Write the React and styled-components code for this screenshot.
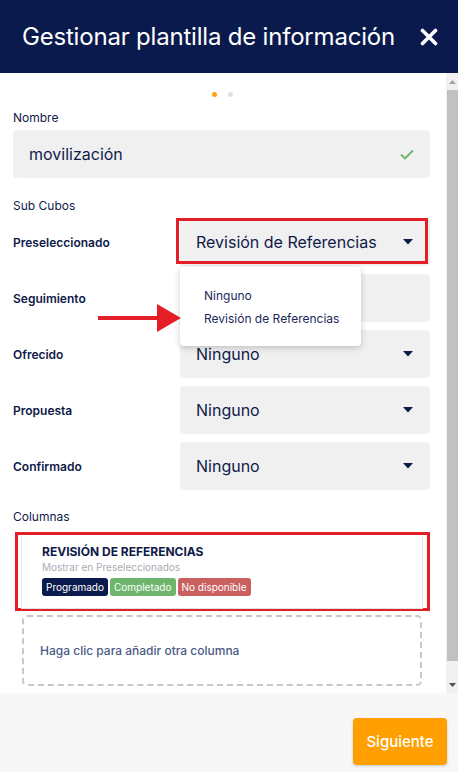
import React from 'react';
import styled, { createGlobalStyle } from 'styled-components';

const GlobalStyle = createGlobalStyle`
  html, body {
    margin: 0;
    padding: 0;
    background: #ffffff;
  }
  body {
    font-family: Inter, 'Open Sans', 'Liberation Sans', sans-serif;
    color: #0f1a4a;
  }
`;

const Modal = styled.div`
  width: 458px;
  height: 772px;
  display: flex;
  flex-direction: column;
  background: #fff;
  overflow: hidden;
`;

const Header = styled.div`
  height: 73px;
  flex: none;
  background: #0b1a4d;
  display: flex;
  align-items: center;
  justify-content: space-between;
  padding: 0 20px 0 22px;
  box-sizing: border-box;
`;

const Title = styled.h1`
  margin: 0;
  color: #fff;
  font-size: 24px;
  font-weight: 400;
  letter-spacing: -0.2px;
`;

const CloseButton = styled.button`
  border: none;
  background: none;
  padding: 0;
  display: flex;
  cursor: pointer;
`;

const BodyRow = styled.div`
  flex: 1;
  display: flex;
  min-height: 0;
`;

const Content = styled.div`
  flex: 1;
  padding: 0 16px 0 13px;
  position: relative;
`;

const Scrollbar = styled.div`
  width: 12px;
  flex: none;
  background: #f1f1f1;
  display: flex;
  flex-direction: column;
  align-items: center;
`;

const ScrollArrow = styled.div`
  height: 17px;
  display: flex;
  align-items: center;
  justify-content: center;
  flex: none;
`;

const ScrollThumb = styled.div`
  width: 11px;
  margin-left: 1px;
  height: 571px;
  background: #c1c1c1;
`;

const Spacer = styled.div`
  flex: 1;
`;

const Dots = styled.div`
  display: flex;
  justify-content: center;
  gap: 11px;
  padding: 19px 0 0 2px;
  height: 6px;
`;

const Dot = styled.span`
  width: 5px;
  height: 5px;
  border-radius: 50%;
  background: ${p => (p.active ? '#ffa000' : '#dde1e6')};
`;

const Label = styled.div`
  font-size: 12px;
  color: #0f1a4a;
  margin-top: ${p => p.top}px;
  line-height: 16px;
`;

const TextInput = styled.div`
  margin-top: 4px;
  height: 48px;
  background: #f0f0f0;
  border-radius: 4px;
  display: flex;
  align-items: center;
  justify-content: space-between;
  padding: 0 16px 0 16px;
  font-size: 16px;
  color: #0f1a4a;
`;

const Rows = styled.div`
  display: flex;
  flex-direction: column;
  gap: 8px;
  margin-top: 4px;
`;

const Row = styled.div`
  display: flex;
  align-items: center;
  position: relative;
`;

const RowLabel = styled.div`
  width: 167px;
  font-size: 12px;
  font-weight: 600;
  color: #0f1a4a;
`;

const Select = styled.div`
  flex: 1;
  height: 48px;
  background: #f0f0f0;
  border-radius: 4px;
  display: flex;
  align-items: center;
  justify-content: space-between;
  padding: 0 17px 0 16px;
  font-size: 16px;
  color: #0f1a4a;
  position: relative;
`;

const Highlight = styled.div`
  position: absolute;
  left: -4px;
  top: 0;
  right: 2px;
  bottom: 2px;
  border: 3px solid #e41e26;
  pointer-events: none;
`;

const Menu = styled.div`
  position: absolute;
  left: 167px;
  top: 49px;
  width: 181px;
  height: 79px;
  background: #fff;
  border-radius: 4px;
  box-shadow: 0 2px 6px rgba(0, 0, 0, 0.2);
  display: flex;
  flex-direction: column;
  justify-content: center;
  gap: 8px;
  padding: 0 0 0 24px;
  box-sizing: border-box;
  z-index: 3;
`;

const MenuItem = styled.div`
  font-size: 12px;
  color: #1c2a5a;
`;

const ArrowMark = styled.svg`
  position: absolute;
  left: 85px;
  top: 85px;
  z-index: 4;
`;

const CardOutline = styled.div`
  margin: 7px 0 0 2px;
  border: 3px solid #e41e26;
  padding: 1px 4px 0 3px;
  height: 79px;
  box-sizing: border-box;
`;

const Card = styled.div`
  height: 73px;
  border: 1px solid #e4e4e4;
  border-top: none;
  background: #fff;
  padding: 8px 0 0 20px;
  box-sizing: border-box;
`;

const CardTitle = styled.div`
  font-size: 12px;
  font-weight: 700;
  color: #0f1a4a;
  line-height: 15px;
`;

const CardSub = styled.div`
  font-size: 10px;
  color: #a9acb6;
  margin-top: 2px;
  line-height: 12px;
`;

const Badges = styled.div`
  display: flex;
  gap: 2px;
  margin-top: 5px;
`;

const Badge = styled.span`
  background: ${p => p.color};
  color: #fff;
  font-size: 10px;
  padding: 0 4px;
  height: 18px;
  line-height: 18px;
  border-radius: 3px;
`;

const AddColumn = styled.div`
  margin: 4px 8px 0 9px;
  height: 71px;
  border: 2px dashed #c8c8c8;
  border-radius: 5px;
  box-sizing: border-box;
  display: flex;
  align-items: center;
  padding-left: 16px;
  font-size: 12px;
  font-weight: 500;
  color: #4b5a86;
`;

const Footer = styled.div`
  height: 79px;
  flex: none;
  background: #f7f7f7;
  display: flex;
  justify-content: flex-end;
  align-items: flex-start;
  padding: 25px 11px 0 0;
  box-sizing: border-box;
`;

const NextButton = styled.button`
  width: 94px;
  height: 47px;
  border: none;
  border-radius: 4px;
  background: #ffa000;
  color: #fff;
  font-family: Inter, 'Open Sans', sans-serif;
  font-size: 15px;
  font-weight: 500;
  box-shadow: 0 1px 3px rgba(0, 0, 0, 0.2);
  cursor: pointer;
`;

const Caret = () => (
  <svg width="10" height="6" viewBox="0 0 10 6">
    <path d="M0 0 L10 0 L5 5.5 Z" fill="#0f1a4a" />
  </svg>
);

const rows = [
  { name: 'Preseleccionado', value: 'Revisión de Referencias', open: true },
  { name: 'Seguimiento', value: '' },
  { name: 'Ofrecido', value: 'Ninguno' },
  { name: 'Propuesta', value: 'Ninguno' },
  { name: 'Confirmado', value: 'Ninguno' },
];

export default function App() {
  return (
    <Modal>
      <GlobalStyle />
      <Header>
        <Title>Gestionar plantilla de información</Title>
        <CloseButton>
          <svg width="18" height="18" viewBox="0 0 18 18">
            <path d="M2.5 2.5 L15.5 15.5 M15.5 2.5 L2.5 15.5" stroke="#fff" strokeWidth="3.6" strokeLinecap="round" />
          </svg>
        </CloseButton>
      </Header>
      <BodyRow>
        <Content>
          <Dots>
            <Dot active />
            <Dot />
          </Dots>
          <Label top={12}>Nombre</Label>
          <TextInput>
            movilización
            <svg width="14" height="11" viewBox="0 0 14 11">
              <path d="M1 5.5 L5 9.5 L13 1.5" stroke="#6ab56d" strokeWidth="1.8" fill="none" />
            </svg>
          </TextInput>
          <Label top={20}>Sub Cubos</Label>
          <Rows>
            {rows.map(row => (
              <Row key={row.name}>
                <RowLabel>{row.name}</RowLabel>
                <Select>
                  {row.value}
                  <Caret />
                  {row.open && <Highlight />}
                </Select>
                {row.open && (
                  <>
                    <Menu>
                      <MenuItem>Ninguno</MenuItem>
                      <MenuItem>Revisión de Referencias</MenuItem>
                    </Menu>
                    <ArrowMark width="84" height="30" viewBox="0 0 84 30">
                      <rect x="0" y="13" width="62" height="4" fill="#e41e26" />
                      <path d="M59 1 L83 15 L59 29 Z" fill="#e41e26" />
                    </ArrowMark>
                  </>
                )}
              </Row>
            ))}
          </Rows>
          <Label top={19}>Columnas</Label>
          <CardOutline>
            <Card>
              <CardTitle>REVISIÓN DE REFERENCIAS</CardTitle>
              <CardSub>Mostrar en Preseleccionados</CardSub>
              <Badges>
                <Badge color="#0b1a4d">Programado</Badge>
                <Badge color="#6db56d">Completado</Badge>
                <Badge color="#c9605f">No disponible</Badge>
              </Badges>
            </Card>
          </CardOutline>
          <AddColumn>Haga clic para añadir otra columna</AddColumn>
        </Content>
        <Scrollbar>
          <ScrollArrow>
            <svg width="7" height="4" viewBox="0 0 7 4"><path d="M0 4 L3.5 0 L7 4 Z" fill="#a3a3a3" /></svg>
          </ScrollArrow>
          <ScrollThumb />
          <Spacer />
          <ScrollArrow>
            <svg width="7" height="4" viewBox="0 0 7 4"><path d="M0 0 L3.5 4 L7 0 Z" fill="#505050" /></svg>
          </ScrollArrow>
        </Scrollbar>
      </BodyRow>
      <Footer>
        <NextButton>Siguiente</NextButton>
      </Footer>
    </Modal>
  );
}
